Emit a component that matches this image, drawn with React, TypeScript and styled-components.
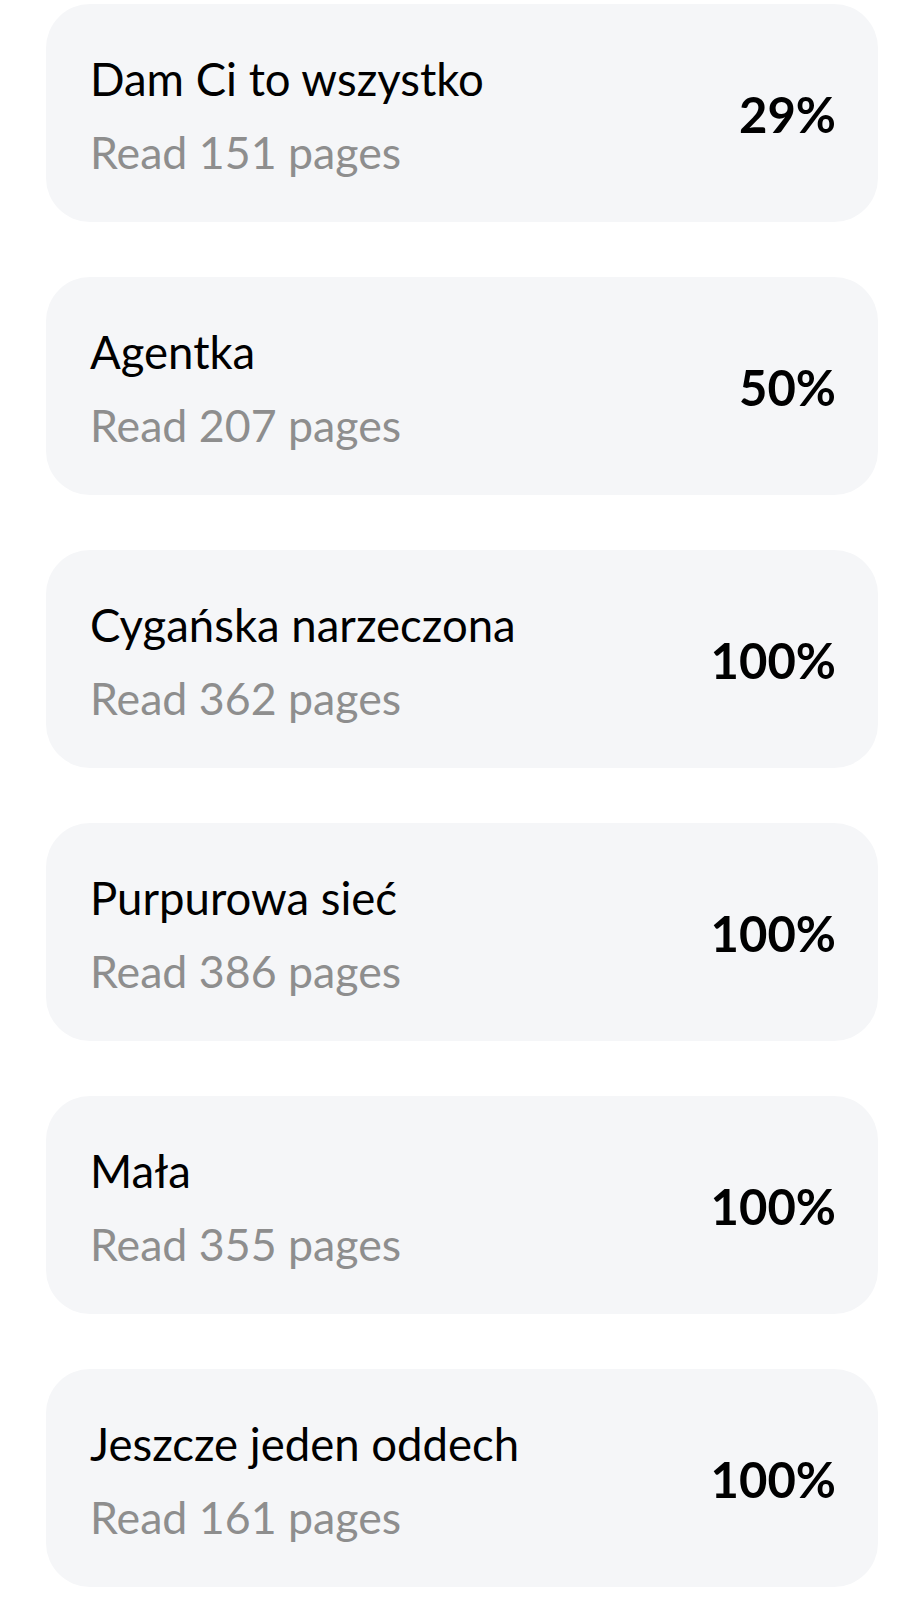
import React from "react";
import styled, { createGlobalStyle } from "styled-components";

const GlobalStyle = createGlobalStyle`
  html, body {
    margin: 0;
    padding: 0;
    background: #ffffff;
  }
  body {
    font-family: Lato, "Noto Sans", sans-serif;
  }
`;

const List = styled.div`
  display: flex;
  flex-direction: column;
  gap: 55px;
  padding: 4px 22px 0 46px;
  width: 832px;
`;

const Card = styled.div`
  display: flex;
  align-items: center;
  justify-content: space-between;
  box-sizing: border-box;
  height: 218px;
  padding: 6px 42px 0 44px;
  background: #f5f6f8;
  border-radius: 44px;
`;

const Info = styled.div`
  display: flex;
  flex-direction: column;
  gap: 19px;
`;

const Title = styled.div`
  font-family: Lato, "Noto Sans", sans-serif;
  font-size: 45.5px;
  line-height: 1.2;
  font-weight: 400;
  color: #000000;
`;

const Subtitle = styled.div`
  font-family: Lato, "Noto Sans", sans-serif;
  font-size: 44.7px;
  line-height: 1.2;
  font-weight: 400;
  color: #8e8e8e;
`;

const Percent = styled.div`
  font-family: Lato, "Noto Sans", sans-serif;
  font-size: 49px;
  line-height: 1.2;
  font-weight: 700;
  color: #000000;
  margin-bottom: 4px;
`;

const books = [
  { title: "Dam Ci to wszystko", pages: 151, progress: 29 },
  { title: "Agentka", pages: 207, progress: 50 },
  { title: "Cygańska narzeczona", pages: 362, progress: 100 },
  { title: "Purpurowa sieć", pages: 386, progress: 100 },
  { title: "Mała", pages: 355, progress: 100 },
  { title: "Jeszcze jeden oddech", pages: 161, progress: 100 },
];

export default function App() {
  return (
    <>
      <GlobalStyle />
      <List>
        {books.map((b) => (
          <Card key={b.title}>
            <Info>
              <Title>{b.title}</Title>
              <Subtitle>Read {b.pages} pages</Subtitle>
            </Info>
            <Percent>{b.progress}%</Percent>
          </Card>
        ))}
      </List>
    </>
  );
}
